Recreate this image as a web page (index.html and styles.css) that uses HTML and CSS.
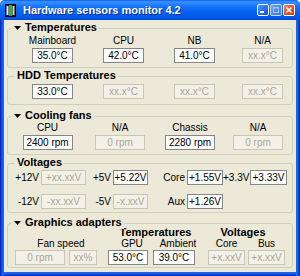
FILE: index.html
```html
<!DOCTYPE html>
<html>
<head>
<meta charset="utf-8">
<link rel="stylesheet" href="styles.css">
</head>
<body>
<div class="window">
  <div class="titlebar">
    <svg class="app-icon" width="11" height="13" viewBox="0 0 11 13">
      <rect x="0.5" y="0.5" width="10" height="12" fill="#1a1a1a" stroke="#000"/>
      <rect x="1.5" y="2" width="2" height="9" fill="#e4e4e4"/>
      <rect x="4" y="1" width="3" height="11" fill="#29b52c"/>
      <rect x="7.5" y="2" width="2" height="9" fill="#cfcfcf"/>
    </svg>
    <span class="title">Hardware sensors monitor 4.2</span>
    <div class="caption-buttons">
      <span class="cbtn cbtn-min"><svg width="10" height="10" viewBox="0 0 10 10"><rect x="2" y="6" width="4" height="2" fill="#fff"/></svg></span>
      <span class="cbtn cbtn-max"><svg width="10" height="10" viewBox="0 0 10 10"><rect x="2.5" y="2.5" width="5" height="5" fill="none" stroke="#a9c4f5"/><rect x="2" y="2" width="6" height="1.5" fill="#a9c4f5"/></svg></span>
      <span class="cbtn cbtn-close"><svg width="10" height="10" viewBox="0 0 10 10"><path d="M2.5 2.5 L7.5 7.5 M7.5 2.5 L2.5 7.5" stroke="#fff" stroke-width="1.6"/></svg></span>
    </div>
  </div>
  <div class="client">
    <section class="group g-temp">
      <div class="legend legend-tri"><svg class="tri" width="7" height="4" viewBox="0 0 7 4"><polygon points="0,0 7,0 3.5,4" fill="#000"/></svg>Temperatures</div>
      <div class="cols cols-temp">
        <div class="col"><div class="lbl">Mainboard</div><div class="box">35.0°C</div></div>
        <div class="col"><div class="lbl">CPU</div><div class="box">42.0°C</div></div>
        <div class="col"><div class="lbl">NB</div><div class="box">41.0°C</div></div>
        <div class="col"><div class="lbl">N/A</div><div class="box off">xx.x°C</div></div>
      </div>
    </section>

    <section class="group g-hdd">
      <div class="legend legend-text">HDD Temperatures</div>
      <div class="cols cols-temp">
        <div class="col"><div class="box">33.0°C</div></div>
        <div class="col"><div class="box off">xx.x°C</div></div>
        <div class="col"><div class="box off">xx.x°C</div></div>
        <div class="col"><div class="box off">xx.x°C</div></div>
      </div>
    </section>

    <section class="group g-fans">
      <div class="legend legend-tri"><svg class="tri" width="7" height="4" viewBox="0 0 7 4"><polygon points="0,0 7,0 3.5,4" fill="#000"/></svg>Cooling fans</div>
      <div class="cols cols-fans">
        <div class="col"><div class="lbl">CPU</div><div class="box wide">2400 rpm</div></div>
        <div class="col"><div class="lbl">N/A</div><div class="box wide off">0 rpm</div></div>
        <div class="col"><div class="lbl">Chassis</div><div class="box wide">2280 rpm</div></div>
        <div class="col"><div class="lbl">N/A</div><div class="box wide off">0 rpm</div></div>
      </div>
    </section>

    <section class="group g-volt">
      <div class="legend legend-text">Voltages</div>
      <div class="volt-grid">
        <span class="vl">+12V</span><span class="box off">+xx.xxV</span>
        <span class="vl">+5V</span><span class="box">+5.22V</span>
        <span class="vl">Core</span><span class="box">+1.55V</span>
        <span class="vl vl-tight">+3.3V</span><span class="box">+3.33V</span>
        <span class="vl">-12V</span><span class="box off">-xx.xxV</span>
        <span class="vl">-5V</span><span class="box off">-x.xxV</span>
        <span class="vl">Aux</span><span class="box">+1.26V</span>
      </div>
    </section>

    <section class="group g-gfx">
      <div class="legend legend-tri"><svg class="tri" width="7" height="4" viewBox="0 0 7 4"><polygon points="0,0 7,0 3.5,4" fill="#000"/></svg>Graphics adapters</div>
      <div class="gfx">
        <div class="gsec gsec-fan">
          <div class="ghead"></div>
          <div class="gsub gsub-fan"><span class="gl gl-fan">Fan speed</span></div>
          <div class="grow"><span class="box off w50">0 rpm</span><span class="box off w28">xx%</span></div>
        </div>
        <div class="gsec gsec-temp">
          <div class="ghead ghead-temp">Temperatures</div>
          <div class="gsub gsub-temp"><span class="gl w40">GPU</span><span class="gl w42">Ambient</span></div>
          <div class="grow"><span class="box w40">53.0°C</span><span class="box w42">39.0°C</span></div>
        </div>
        <div class="gsec gsec-volt">
          <div class="ghead ghead-volt">Voltages</div>
          <div class="gsub gsub-volt"><span class="gl w37">Core</span><span class="gl w37">Bus</span></div>
          <div class="grow"><span class="box off w37">+x.xxV</span><span class="box off w37">+x.xxV</span></div>
        </div>
      </div>
    </section>
  </div>
</div>
</body>
</html>
```

FILE: styles.css
```css
html, body {
  margin: 0;
  padding: 0;
  background: #ffffff;
}

body {
  font-family: "Liberation Sans", Arial, sans-serif;
  font-size: 10px;
  color: #000;
}

.window {
  width: 300px;
  height: 276px;
  box-sizing: border-box;
  display: flex;
  flex-direction: column;
  background:
    linear-gradient(to right, #0019a8 0, #0841d8 1px, #1a66ee 3px, #1a66ee 4px) left top / 4px 100% no-repeat,
    linear-gradient(to left, #0019a8 0, #0841d8 1px, #1a66ee 3px, #1a66ee 4px) right top / 4px 100% no-repeat,
    linear-gradient(to top, #0019a8 0, #0841d8 1px, #1a66ee 3px, #1a66ee 4px) left bottom / 100% 4px no-repeat,
    #0841d8;
  border-radius: 5px 5px 0 0;
  overflow: hidden;
}

/* ---------- title bar ---------- */
.titlebar {
  height: 20px;
  flex: none;
  display: flex;
  align-items: center;
  padding: 0 5px 0 5px;
  background: linear-gradient(to bottom,
    #0a5ce6 0%, #3a8dff 8%, #2b86ff 18%, #0f72fb 35%,
    #0565f3 55%, #035fee 72%, #0257e4 88%, #0047d4 100%);
}

.app-icon {
  flex: none;
  display: block;
  margin-top: 0px;
}

.title {
  margin-left: 7px;
  color: #fff;
  font-weight: bold;
  font-size: 11px;
  letter-spacing: 0;
  text-shadow: 1px 1px 0 #0a2a9a;
  white-space: nowrap;
  flex: 1;
}

.caption-buttons {
  display: flex;
  gap: 1px;
  flex: none;
}

.cbtn {
  width: 12px;
  height: 12px;
  box-sizing: border-box;
  border: 1px solid #fff;
  border-radius: 2px;
  display: flex;
  align-items: center;
  justify-content: center;
  overflow: hidden;
}

.cbtn svg {
  display: block;
  flex: none;
}

.cbtn-min {
  background: linear-gradient(135deg, #5a9cff 0%, #2a74f6 45%, #1453e0 100%);
}

.cbtn-max {
  background: linear-gradient(135deg, #6ea6ff 0%, #4a88f4 50%, #3f77e6 100%);
  border-color: #c9dbfb;
}

.cbtn-close {
  background: linear-gradient(135deg, #f18a68 0%, #e2552f 45%, #c7391a 100%);
}

/* ---------- client area ---------- */
.client {
  flex: 1;
  margin: 0 4px 4px 4px;
  padding: 0 3px 4px 3px;
  background: #ece9d8;
  display: flex;
  flex-direction: column;
}

.group {
  position: relative;
  border: 1px solid #d0d0bf;
  border-radius: 3px;
}

.g-temp { margin-top: 8px; padding: 6px 0 4px 0; }
.g-hdd  { margin-top: 8px; padding: 7px 0 5px 0; }
.g-fans { margin-top: 11px; padding: 5px 0 4px 0; }
.g-volt { margin-top: 8px; padding: 6px 0 3px 0; }
.g-gfx  { margin-top: 10px; padding: 2px 0 2px 0; }

.legend {
  position: absolute;
  top: -8px;
  background: #ece9d8;
  font-weight: bold;
  font-size: 11px;
  line-height: 13px;
  padding: 0 2px;
  display: flex;
  align-items: center;
  white-space: nowrap;
}

.legend-tri { left: 4px; }
.legend-text { left: 7px; }

.tri {
  display: block;
  margin-right: 4px;
  margin-top: 1px;
}

/* ---------- column groups ---------- */
.cols {
  display: grid;
}

.cols-temp {
  padding-left: 9px;
  grid-template-columns: 71px 71px 71px 65px;
}

.cols-fans {
  padding-left: 4px;
  grid-template-columns: 71px 74px 66px 70px;
}

.col {
  display: flex;
  flex-direction: column;
  align-items: center;
  gap: 1px;
}

.lbl {
  line-height: 12px;
  white-space: nowrap;
}

.box {
  box-sizing: border-box;
  width: 41px;
  height: 15px;
  border: 1px solid #868686;
  background: #fff;
  line-height: 13px;
  text-align: center;
  white-space: nowrap;
  overflow: hidden;
  color: #000;
  display: block;
}

.box.wide { width: 50px; }

.box.off {
  background: #f3f1e7;
  border-color: #c9c6b6;
  color: #aaa79a;
}

/* ---------- voltages ---------- */
.volt-grid {
  display: grid;
  grid-template-columns: 33px 45px 27px 35px 39px 36px 27px 37px;
  grid-auto-rows: 15px;
  row-gap: 9px;
}

.volt-grid .box { width: auto; }

.vl {
  text-align: right;
  padding-right: 2px;
  line-height: 15px;
  white-space: nowrap;
}

.vl-tight { padding-right: 1px; }

/* ---------- graphics ---------- */
.gfx {
  display: flex;
  margin-left: 7px;
}

.gsec {
  display: flex;
  flex-direction: column;
}

.gsec-fan { width: 82px; }
.gsec-temp { width: 87px; margin-left: 11px; }
.gsec-volt { width: 77px; margin-left: 13px; }

.ghead {
  height: 12px;
  line-height: 12px;
  font-weight: bold;
  font-size: 11px;
  text-align: center;
  white-space: nowrap;
}

.ghead-temp { padding-left: 8px; }
.ghead-volt { padding-right: 7px; }

.gsub {
  display: flex;
  height: 12px;
  line-height: 12px;
}

.gsub-fan { padding-left: 10px; }
.gsub-temp { padding-left: 4px; gap: 5px; }
.gsub-volt { gap: 3px; }

.gl {
  text-align: center;
  white-space: nowrap;
  flex: none;
}

.gl-fan { width: 100%; }

.grow {
  display: flex;
  justify-content: space-between;
}

.w50 { width: 50px; }
.w28 { width: 28px; }
.w40 { width: 40px; }
.w42 { width: 42px; }
.w37 { width: 37px; }

.grow .box.w50 { width: 50px; }
.grow .box.w28 { width: 28px; }
.grow .box.w40 { width: 40px; }
.grow .box.w42 { width: 42px; }
.grow .box.w37 { width: 37px; }
```
